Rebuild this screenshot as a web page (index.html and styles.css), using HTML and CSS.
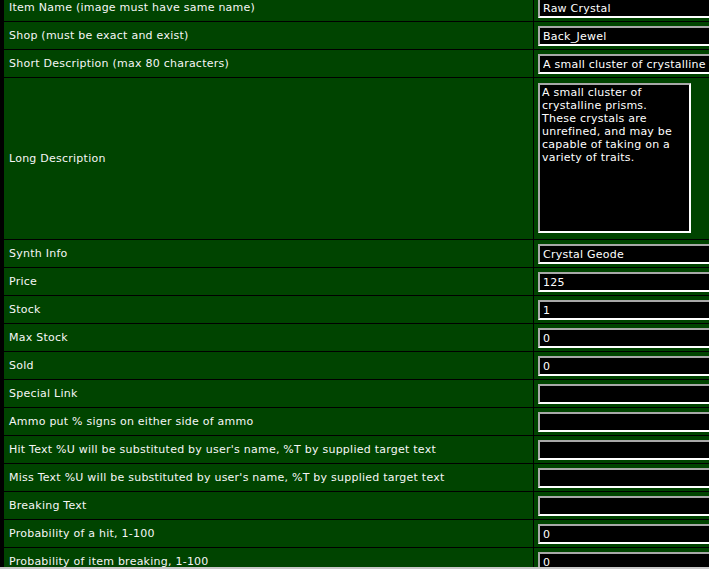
FILE: index.html
```html
<!DOCTYPE html>
<html>
<head>
<meta charset="utf-8">
<link rel="stylesheet" href="styles.css">
</head>
<body>
<div class="frame">
  <div class="row"><div class="label">Item Name (image must have same name)</div><div class="value"><input class="field" type="text" value="Raw Crystal"></div></div>
  <div class="row"><div class="label">Shop (must be exact and exist)</div><div class="value"><input class="field" type="text" value="Back_Jewel"></div></div>
  <div class="row"><div class="label">Short Description (max 80 characters)</div><div class="value"><input class="field" type="text" value="A small cluster of crystalline prisms."></div></div>
  <div class="row tall"><div class="label">Long Description</div><div class="value"><textarea class="area">A small cluster of crystalline prisms. These crystals are unrefined, and may be capable of taking on a variety of traits.</textarea></div></div>
  <div class="row"><div class="label">Synth Info</div><div class="value"><input class="field" type="text" value="Crystal Geode"></div></div>
  <div class="row"><div class="label">Price</div><div class="value"><input class="field" type="text" value="125"></div></div>
  <div class="row"><div class="label">Stock</div><div class="value"><input class="field" type="text" value="1"></div></div>
  <div class="row"><div class="label">Max Stock</div><div class="value"><input class="field" type="text" value="0"></div></div>
  <div class="row"><div class="label">Sold</div><div class="value"><input class="field" type="text" value="0"></div></div>
  <div class="row"><div class="label">Special Link</div><div class="value"><input class="field" type="text" value=""></div></div>
  <div class="row"><div class="label">Ammo put % signs on either side of ammo</div><div class="value"><input class="field" type="text" value=""></div></div>
  <div class="row"><div class="label">Hit Text %U will be substituted by user's name, %T by supplied target text</div><div class="value"><input class="field" type="text" value=""></div></div>
  <div class="row"><div class="label">Miss Text %U will be substituted by user's name, %T by supplied target text</div><div class="value"><input class="field" type="text" value=""></div></div>
  <div class="row"><div class="label">Breaking Text</div><div class="value"><input class="field" type="text" value=""></div></div>
  <div class="row"><div class="label">Probability of a hit, 1-100</div><div class="value"><input class="field" type="text" value="0"></div></div>
  <div class="row"><div class="label">Probability of item breaking, 1-100</div><div class="value"><input class="field" type="text" value="0"></div></div>
</div>
<div class="edge"></div>
</body>
</html>
```

FILE: styles.css
```css
html, body {
  margin: 0;
  padding: 0;
  background: #004400;
  overflow: hidden;
}
body {
  font-family: "DejaVu Sans", Verdana, sans-serif;
  font-size: 11px;
  color: #f6f6f6;
}
.frame {
  border-left: 4px solid #000;
  margin-top: -6px;
  width: 900px;
}
.row {
  display: grid;
  grid-template-columns: 530px 1fr;
  height: 28px;
  box-sizing: border-box;
  border-bottom: 1px solid #000;
}
.row.tall {
  height: 162px;
}
.label {
  box-sizing: border-box;
  border-right: 1px solid #000;
  padding-left: 5px;
  display: flex;
  align-items: center;
  white-space: nowrap;
  letter-spacing: 0.24px;
}
.value {
  padding: 4px 0 0 4px;
}
.row.tall .value {
  padding-top: 5px;
}
.field {
  display: block;
  box-sizing: border-box;
  width: 260px;
  height: 20px;
  margin: 0;
  padding: 0 3px;
  background: #000;
  color: #fff;
  font-family: "DejaVu Sans", Verdana, sans-serif;
  font-size: 11px;
  letter-spacing: 0.24px;
  border-style: solid;
  border-width: 2px;
  border-color: #a8a8a8 #ffffff #ffffff #a8a8a8;
  outline: none;
}
.area {
  display: block;
  box-sizing: border-box;
  width: 153px;
  height: 150px;
  margin: 0;
  padding: 1px 11px 1px 2px;
  background: #000;
  color: #fff;
  font-family: "DejaVu Sans", Verdana, sans-serif;
  font-size: 11px;
  line-height: 13px;
  letter-spacing: 0.24px;
  border-style: solid;
  border-width: 2px;
  border-color: #a8a8a8 #ffffff #ffffff #a8a8a8;
  resize: none;
  overflow: hidden;
  outline: none;
}
.edge {
  position: fixed;
  left: 0;
  right: 0;
  bottom: 0;
  height: 2px;
  background: #c8c8c8;
}
```
